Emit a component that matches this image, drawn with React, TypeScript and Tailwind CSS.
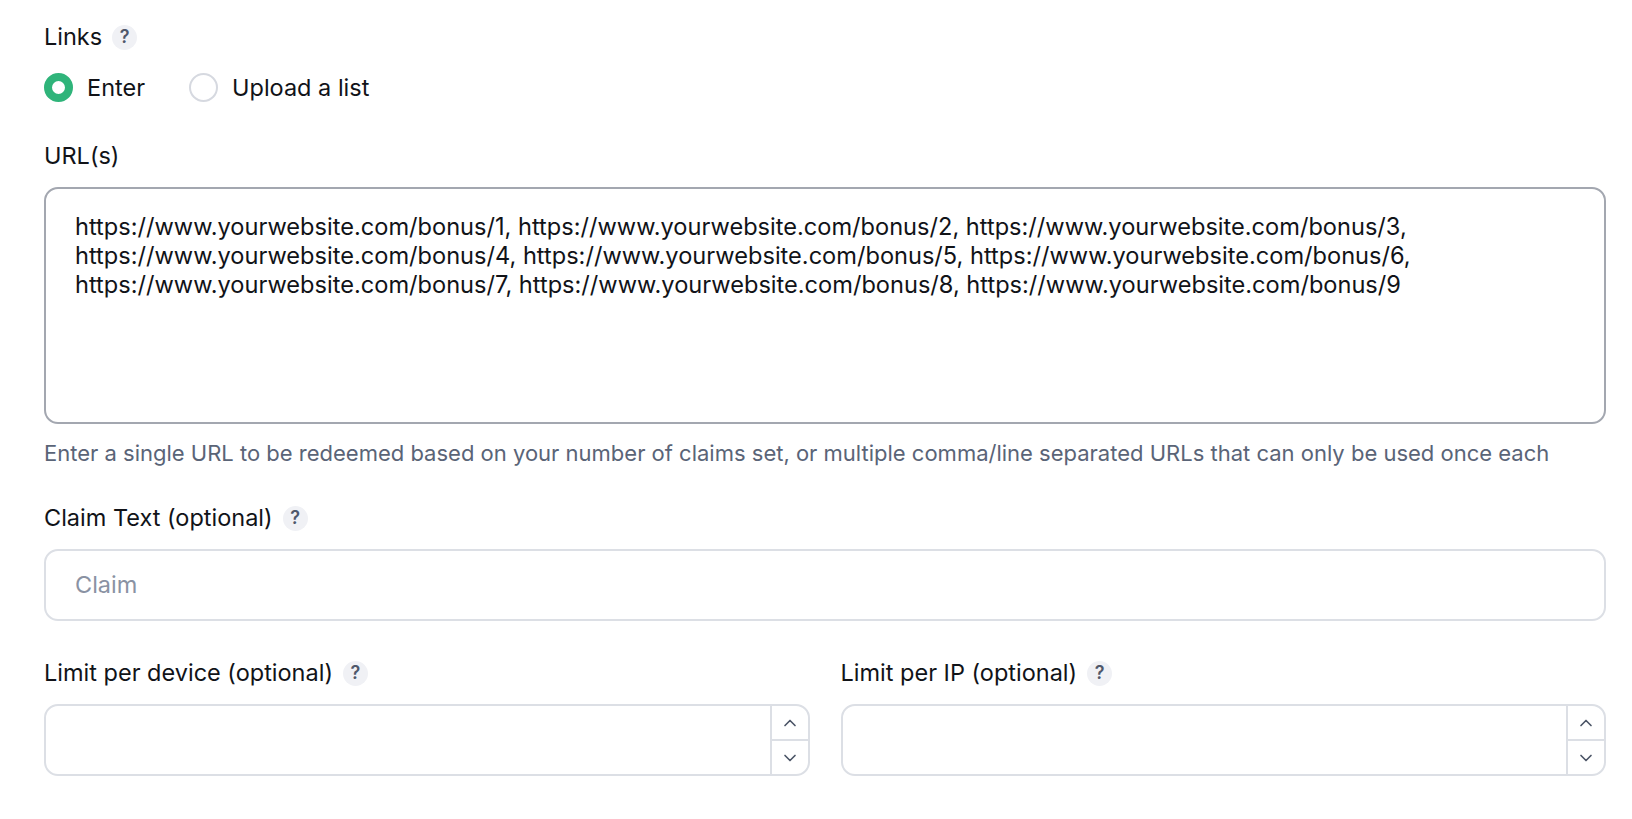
import { ChevronUp, ChevronDown } from "lucide-react"

function HelpBadge() {
  return (
    <span className="inline-flex h-[25px] w-[25px] items-center justify-center rounded-full bg-[#f0f1f5] text-[18px] font-semibold leading-none text-[#4f586b]">
      ?
    </span>
  )
}

function Label({ text, help }: { text: string; help?: boolean }) {
  return (
    <div className="flex items-center gap-[10px] text-[23.5px] leading-[30px] text-[#111318]">
      <span>{text}</span>
      {help && <HelpBadge />}
    </div>
  )
}

function Radio({ checked, label }: { checked: boolean; label: string }) {
  return (
    <label className="flex items-center gap-[14px]">
      <span
        className={
          checked
            ? "h-[29px] w-[29px] rounded-full border-[8px] border-[#2fb47a] bg-white"
            : "h-[29px] w-[29px] rounded-full border-2 border-[#d6d9e0] bg-white"
        }
      />
      <span className="text-[23.5px] leading-[33px] text-[#111318]">{label}</span>
    </label>
  )
}

function NumberInput() {
  return (
    <div className="flex h-[72px] overflow-hidden rounded-[14px] border-2 border-[#dcdfe5] bg-white">
      <div className="flex-1" />
      <div className="flex w-[38px] flex-col border-l-2 border-[#dcdfe5]">
        <div className="flex flex-1 items-center justify-center border-b-2 border-[#dcdfe5] text-[#4b5466]">
          <ChevronUp size={20} strokeWidth={2} />
        </div>
        <div className="flex flex-1 items-center justify-center text-[#4b5466]">
          <ChevronDown size={20} strokeWidth={2} />
        </div>
      </div>
    </div>
  )
}

const urls = Array.from({ length: 9 }, (_, i) => `https://www.yourwebsite.com/bonus/${i + 1}`)

export default function App() {
  return (
    <div className="min-h-screen bg-white pl-[44px] pr-[26px] pt-[22px] font-['Inter',sans-serif]">
      <Label text="Links" help />

      <div className="mt-[19px] flex items-center gap-[44px]">
        <Radio checked label="Enter" />
        <Radio checked={false} label="Upload a list" />
      </div>

      <div className="mt-[37px]">
        <Label text="URL(s)" />
      </div>

      <div className="mt-[16px] h-[237px] rounded-[14px] border-2 border-[#a3a7b0] px-[29px] pt-[23px] text-[23.6px] leading-[29px] text-[#111318]">
        <div>{urls.slice(0, 3).join(", ")},</div>
        <div>{urls.slice(3, 6).join(", ")},</div>
        <div>{urls.slice(6, 9).join(", ")}</div>
      </div>

      <p className="mt-[15px] text-[22px] leading-[28px] text-[#5a6477]">
        Enter a single URL to be redeemed based on your number of claims set, or multiple comma/line separated URLs that can only be used once each
      </p>

      <div className="mt-[36px]">
        <Label text="Claim Text (optional)" help />
      </div>

      <div className="mt-[16px] flex h-[72px] items-center rounded-[14px] border-2 border-[#dcdfe5] px-[29px] text-[23.5px] text-[#8a92a3]">
        Claim
      </div>

      <div className="mt-[37px] grid grid-cols-2 gap-[31px]">
        <div className="flex flex-col gap-[16px]">
          <Label text="Limit per device (optional)" help />
          <NumberInput />
        </div>
        <div className="flex flex-col gap-[16px]">
          <Label text="Limit per IP (optional)" help />
          <NumberInput />
        </div>
      </div>
    </div>
  )
}
